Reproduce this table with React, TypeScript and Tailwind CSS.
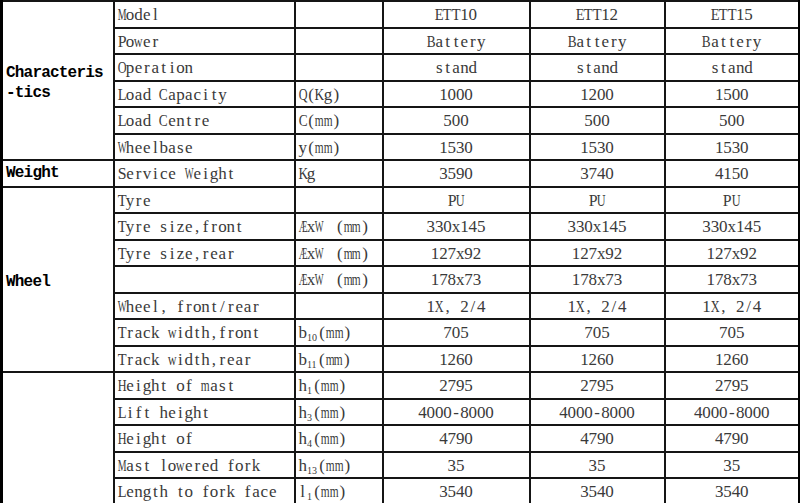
import React from "react";

const S55 = "scale-x-[0.55]";
const S58 = "scale-x-[0.58]";
const S67 = "scale-x-[0.67]";
const S72 = "scale-x-[0.72]";
const S78 = "scale-x-[0.78]";
const S85 = "scale-x-[0.85]";
const S93 = "scale-x-[0.93]";

function scaleFor(c: string): string {
  if ("W".includes(c)) return S55;
  if ("MÆ".includes(c)) return S58;
  if ("m".includes(c)) return S67;
  if ("wADHOQUXNVYG".includes(c)) return S72;
  if ("BCRK".includes(c)) return S78;
  if ("ELTZF".includes(c)) return S85;
  if ("PS".includes(c)) return S93;
  return "";
}

function T({ t }: { t: string }) {
  return (
    <span className="inline-flex">
      {Array.from(t).map((c, i) => (
        <span key={i} className={`inline-flex justify-center w-[8.4px] ${scaleFor(c)}`}>
          {c === " " ? "\u00a0" : c}
        </span>
      ))}
    </span>
  );
}

const Sub = ({ b, s }: { b: string; s: string }) => (
  <span className="inline-flex items-baseline">
    <T t={b} />
    <span className="text-[10px] relative top-[3px] mr-[1px]">{s}</span>
    <T t="(mm)" />
  </span>
);

const Phi = () => (
  <span className="inline-flex items-baseline">
    <T t="ÆxW" />
    <span className="inline-block w-[12px]" />
    <T t="(mm)" />
  </span>
);

type Row = { name: string; unit: React.ReactNode; v: string[] };

const rows: Row[] = [
  { name: "Model", unit: "", v: ["ETT10", "ETT12", "ETT15"] },
  { name: "Power", unit: "", v: ["Battery", "Battery", "Battery"] },
  { name: "Operation", unit: "", v: ["stand", "stand", "stand"] },
  { name: "Load Capacity", unit: <T t="Q(Kg)" />, v: ["1000", "1200", "1500"] },
  { name: "Load Centre", unit: <T t="C(mm)" />, v: ["500", "500", "500"] },
  { name: "Wheelbase", unit: <T t="y(mm)" />, v: ["1530", "1530", "1530"] },
  { name: "Service Weight", unit: <T t="Kg" />, v: ["3590", "3740", "4150"] },
  { name: "Tyre", unit: "", v: ["PU", "PU", "PU"] },
  { name: "Tyre size,front", unit: <Phi />, v: ["330x145", "330x145", "330x145"] },
  { name: "Tyre size,rear", unit: <Phi />, v: ["127x92", "127x92", "127x92"] },
  { name: "", unit: <Phi />, v: ["178x73", "178x73", "178x73"] },
  { name: "Wheel, front/rear", unit: "", v: ["1X, 2/4", "1X, 2/4", "1X, 2/4"] },
  { name: "Track width,front", unit: <Sub b="b" s="10" />, v: ["705", "705", "705"] },
  { name: "Track width,rear", unit: <Sub b="b" s="11" />, v: ["1260", "1260", "1260"] },
  { name: "Height of mast", unit: <Sub b="h" s="1" />, v: ["2795", "2795", "2795"] },
  { name: "Lift height", unit: <Sub b="h" s="3" />, v: ["4000-8000", "4000-8000", "4000-8000"] },
  { name: "Height of", unit: <Sub b="h" s="4" />, v: ["4790", "4790", "4790"] },
  { name: "Mast lowered fork", unit: <Sub b="h" s="13" />, v: ["35", "35", "35"] },
  { name: "Length to fork face", unit: <Sub b="l" s="1" />, v: ["3540", "3540", "3540"] },
];

const cats: Record<number, { span: number; label: React.ReactNode }> = {
  0: {
    span: 6,
    label: (
      <>
        Characteris
        <br />
        -tics
      </>
    ),
  },
  6: { span: 1, label: "Weight" },
  7: { span: 7, label: "Wheel" },
  14: { span: 5, label: "" },
};

const cell = "border-2 border-[#151515] p-0 h-[26.5px]";

export default function App() {
  return (
    <div className="w-[800px] h-[503px] overflow-hidden bg-white">
      <table className="border-collapse table-fixed w-[798px] text-[#3a3a3a] font-['Liberation_Serif',serif] text-[17px]">
        <colgroup>
          <col className="w-[112px]" />
          <col className="w-[181px]" />
          <col className="w-[88px]" />
          <col className="w-[147px]" />
          <col className="w-[135px]" />
          <col className="w-[135px]" />
        </colgroup>
        <tbody>
          {rows.map((r, i) => (
            <tr key={i}>
              {cats[i] && (
                <td
                  rowSpan={cats[i].span}
                  className="border-2 border-[#151515] border-l-[3px] border-l-black p-0 pl-[3px] align-middle font-['Liberation_Mono',monospace] text-[16px] font-bold tracking-[-0.8px] text-black"
                >
                  <div className={i === 0 ? "pt-[5px] leading-[20px]" : i === 7 ? "pt-[5px] leading-[20px]" : "leading-[20px]"}>
                    {cats[i].label}
                  </div>
                </td>
              )}
              <td className={`${cell} pl-[3px] leading-none`}>
                <div className="flex items-center pt-[1px]">
                  <T t={r.name} />
                </div>
              </td>
              <td className={`${cell} pl-[3px] leading-none`}>
                <div className="flex items-center pt-[1px]">{r.unit}</div>
              </td>
              {r.v.map((v, j) => (
                <td
                  key={j}
                  className={`${cell} leading-none ${j === 2 ? "border-r-[3px] border-r-black" : ""}`}
                >
                  <div className="flex justify-center items-center pt-[1px]">
                    <T t={v} />
                  </div>
                </td>
              ))}
            </tr>
          ))}
        </tbody>
      </table>
    </div>
  );
}
